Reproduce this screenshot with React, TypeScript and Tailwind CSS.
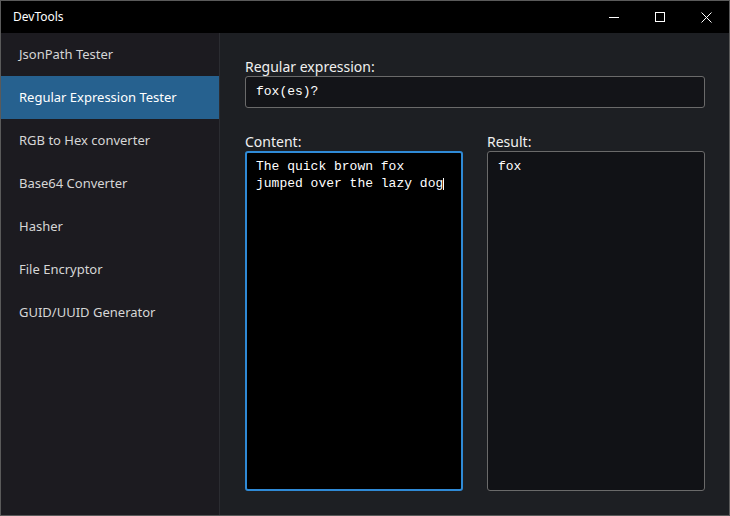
import React from 'react';

const tools = [
  'JsonPath Tester',
  'Regular Expression Tester',
  'RGB to Hex converter',
  'Base64 Converter',
  'Hasher',
  'File Encryptor',
  'GUID/UUID Generator',
];

const ui = { fontFamily: '"Segoe UI", "Noto Sans", sans-serif' };
const mono = { fontFamily: '"Liberation Mono", monospace' };

export default function App() {
  return (
    <div
      className="flex h-[516px] w-[730px] flex-col border border-[#5a5a5a] bg-[#1d1f23] text-white"
      style={ui}
    >
      {/* title bar */}
      <div className="flex h-[32px] shrink-0 items-center justify-between bg-black">
        <p className="pl-3 text-[12px]">DevTools</p>
        <div className="flex h-full items-center">
          <div className="flex h-full w-[46px] items-center justify-center">
            <div className="h-px w-[10px] bg-white" />
          </div>
          <div className="flex h-full w-[46px] items-center justify-center">
            <div className="size-[10px] border border-white" />
          </div>
          <div className="flex h-full w-[46px] items-center justify-center">
            <svg width="11" height="11" viewBox="0 0 11 11">
              <path d="M0.5 0.5L10.5 10.5M10.5 0.5L0.5 10.5" stroke="white" strokeWidth="1" />
            </svg>
          </div>
        </div>
      </div>

      <div className="flex flex-1">
        {/* sidebar */}
        <div className="w-[219px] shrink-0 border-r border-[#2b2c31] bg-[#1c1b20]">
          {tools.map((t, i) => (
            <div
              key={t}
              className={
                i === 1
                  ? 'flex h-[43px] items-center bg-[#26618f] pl-[18px] text-[13px] text-white'
                  : 'flex h-[43px] items-center pl-[18px] text-[13px] text-[#d6d6d6]'
              }
            >
              {t}
            </div>
          ))}
        </div>

        {/* main */}
        <div className="flex flex-1 flex-col pt-[24px] pr-6 pb-6 pl-[25px]">
          <p className="text-[14px] leading-[19px] text-[#f0f0f0]">Regular expression:</p>
          <div
            className="flex h-[32px] items-center rounded-[3px] border border-[#6a6a6a] bg-[#131418] px-[10px] text-[13px]"
            style={mono}
          >
            fox(es)?
          </div>

          <div className="mt-[24px] flex flex-1 gap-6">
            <div className="flex flex-1 flex-col">
              <p className="text-[14px] leading-[19px] text-[#f0f0f0]">Content:</p>
              <div
                className="flex-1 rounded-[3px] border-2 border-[#2f8ad6] bg-black px-[9px] pt-[5px] text-[13px] leading-[17px]"
                style={mono}
              >
                The quick brown fox
                <br />
                jumped over the lazy dog
                <span className="inline-block h-[12px] w-px translate-y-[3px] bg-white align-baseline" />
              </div>
            </div>
            <div className="flex flex-1 flex-col">
              <p className="text-[14px] leading-[19px] text-[#f0f0f0]">Result:</p>
              <div
                className="flex-1 rounded-[3px] border border-[#6a6a6a] bg-[#111216] px-[10px] pt-[6px] text-[13px] leading-[17px]"
                style={mono}
              >
                fox
              </div>
            </div>
          </div>
        </div>
      </div>
    </div>
  );
}
